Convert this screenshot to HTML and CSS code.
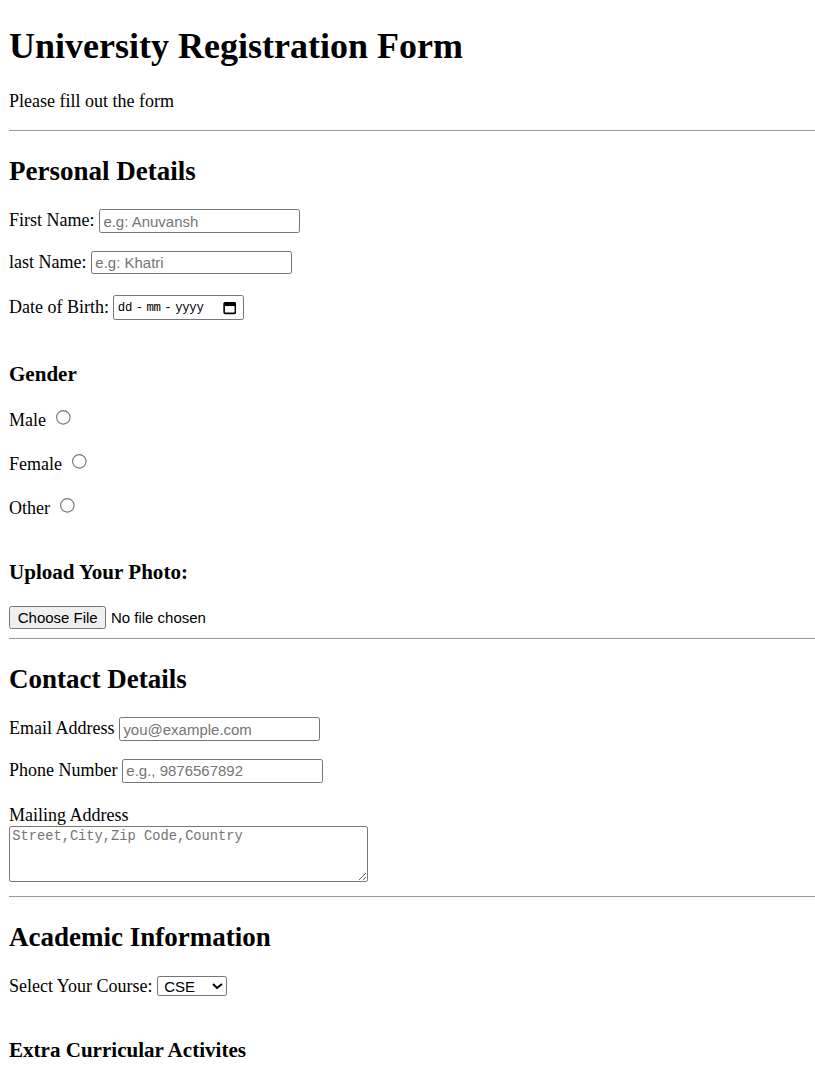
FILE: index.html
```html
<!DOCTYPE html>
<html>
<head>
<meta charset="utf-8">
<title>University Registration Form</title>
<link rel="stylesheet" href="styles.css">
</head>
<body>
<h1>University Registration Form</h1>
<p>Please fill out the form</p>
<hr>
<form>
<h2>Personal Details</h2>
<p><label>First Name: </label><input class="text" type="text" placeholder="e.g: Anuvansh"></p>
<p><label>last Name: </label><input class="text" type="text" placeholder="e.g: Khatri"></p>
<p class="dob"><label>Date of Birth: </label><span class="datebox"><input class="date" type="text" placeholder="dd - mm - yyyy"><svg class="cal" width="12" height="12" viewBox="0 0 12 12"><rect x="1" y="1.5" width="10" height="9.5" rx="1" fill="none" stroke="#000" stroke-width="1.4"/><rect x="1" y="1.5" width="10" height="3" fill="#000"/></svg></span></p>
<h3 class="spaced">Gender</h3>
<p class="radio"><label>Male </label><input type="radio" name="g"></p>
<p class="radio"><label>Female </label><input type="radio" name="g"></p>
<p class="radio"><label>Other </label><input type="radio" name="g"></p>
<h3 class="spaced upload">Upload Your Photo:</h3>
<input class="file" type="file">
<hr>
<h2>Contact Details</h2>
<p><label>Email Address </label><input class="text" type="email" placeholder="you@example.com"></p>
<p><label>Phone Number </label><input class="text" type="tel" placeholder="e.g., 9876567892"></p>
<p class="mail"><label>Mailing Address</label><textarea class="addr" placeholder="Street,City,Zip Code,Country"></textarea></p>
<hr>
<h2>Academic Information</h2>
<p><label>Select Your Course: </label><select class="course"><option>CSE</option><option>ECE</option><option>ME</option></select></p>
<h3 class="spaced">Extra Curricular Activites</h3>
</form>
</body>
</html>
```
FILE: styles.css
```css
html {
  zoom: 1.125;
}
body {
  margin: 8px 0 8px 8px;
  font-family: "Liberation Serif", "Times New Roman", serif;
  font-size: 16px;
  color: #000;
  background: #fff;
}
h1 {
  margin: 14.5px 0 21px;
}
h2 {
  margin: 22px 0 20px;
}
input, select, button, textarea {
  font-family: "Liberation Sans", Arial, sans-serif;
  font-size: 13.333px;
}
.text {
  width: 179px;
  height: 21px;
  box-sizing: border-box;
  border: 1px solid #767676;
  border-radius: 2px;
  padding: 1px 3px;
}
.text::placeholder { color: #757575; }
.dob {
  margin-top: 18.7px;
}
.datebox {
  display: inline-flex;
  align-items: center;
  width: 116px;
  height: 22px;
  box-sizing: border-box;
  border: 1px solid #767676;
  border-radius: 2px;
  padding: 0 6px 0 3px;
  background: #fff;
  vertical-align: 2px;
}
.date {
  flex: 1;
  min-width: 0;
  border: none;
  outline: none;
  padding: 0;
  font-family: "Liberation Mono", "DejaVu Sans Mono", monospace;
  font-size: 11px;
  letter-spacing: -0.3px;
  word-spacing: -3px;
}
.date::placeholder { color: #000; }
.cal { flex: none; }
.spaced {
  margin-top: 37px;
}
.upload {
  margin-top: 34px;
}
.radio {
  line-height: 23px;
  height: 23px;
}
.radio input {
  margin: 0 3px 0 5px;
  vertical-align: 1px;
}
.file {
  display: block;
}
.mail {
  margin-top: 19.5px;
  margin-bottom: 13px;
}
.addr {
  display: block;
  margin-top: 0;
  font-family: "Liberation Mono", "DejaVu Sans Mono", monospace;
  font-size: 12.2px;
  width: 319px;
  height: 50px;
  box-sizing: border-box;
  border: 1px solid #767676;
  border-radius: 2px;
  padding: 2px 2px;
  resize: both;
}
.addr::placeholder { color: #757575; }
.course {
  width: 62px;
  height: 18px;
  box-sizing: border-box;
  border: 1px solid #767676;
  border-radius: 2px;
  background: #fff;
  padding: 0 0 0 2px;
}
hr {
  border: none;
  border-top: 1px solid #9a9a9a;
  margin: 8px 0;
}
```
